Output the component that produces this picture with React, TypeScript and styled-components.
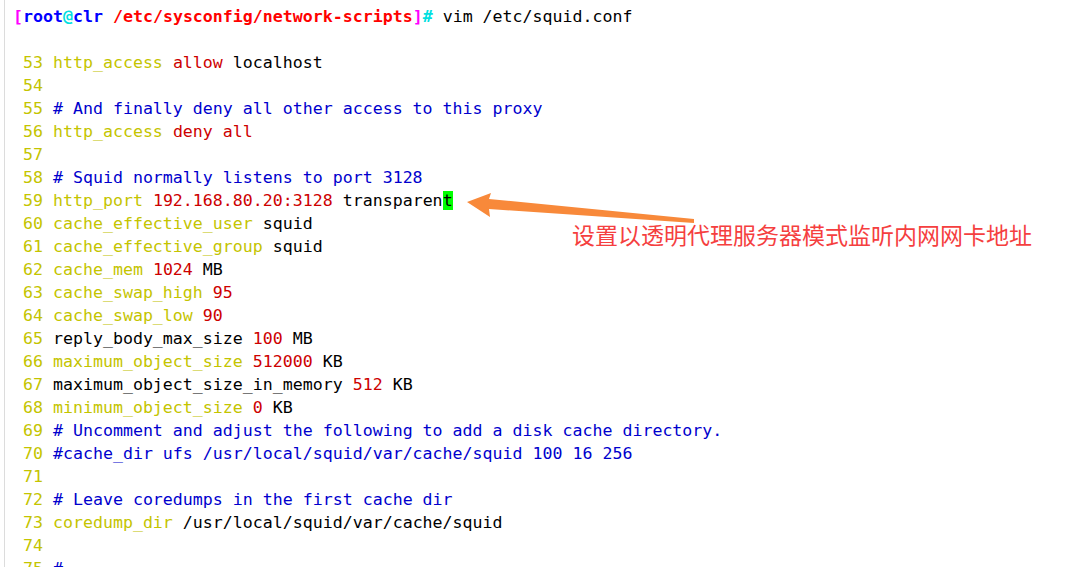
import React from "react";
import styled, { createGlobalStyle } from "styled-components";

const Global = createGlobalStyle`
  html, body { margin: 0; padding: 0; background: #ffffff; overflow: hidden; }
  #root { width: 1084px; height: 567px; }
`;

const Screen = styled.div`
  position: relative;
  width: 1084px;
  height: 567px;
  overflow: hidden;
  background: #ffffff;
  display: flex;
`;

const Gutter = styled.div`
  width: 4px;
  flex: none;
  border-right: 1px solid #dcdcdc;
`;

const Terminal = styled.div`
  flex: 1;
  padding: 5px 0 0 8px;
  font-family: "DejaVu Sans Mono", "Liberation Mono", monospace;
  font-size: 16.6px;
  line-height: 23px;
  color: #000000;
  white-space: pre;
`;

const Row = styled.div`
  height: 23px;
`;

const Num = styled.span`
  color: #c4c400;
`;

type Tone = "kw" | "val" | "plain" | "comment" | "cursor";

const toneColor: Record<Tone, string> = {
  kw: "#c4c400",
  val: "#cd0000",
  plain: "#000000",
  comment: "#0000cd",
  cursor: "#000000",
};

const Tok = styled.span<{ $tone: Tone }>`
  color: ${(p) => toneColor[p.$tone]};
  background: ${(p) => (p.$tone === "cursor" ? "#00ff00" : "transparent")};
`;

const P = styled.span<{ $c: string }>`
  color: ${(p) => p.$c};
  font-weight: bold;
`;

const Label = styled.div`
  position: absolute;
  left: 572px;
  top: 219px;
  font-family: "Noto Sans CJK SC", "Noto Sans", sans-serif;
  font-size: 23px;
  line-height: 30px;
  color: #f53f3f;
  white-space: nowrap;
`;

const ArrowSvg = styled.svg`
  position: absolute;
  left: 0;
  top: 0;
  pointer-events: none;
`;

type Seg = [Tone, string];
const lines: [number, Seg[]][] = [
  [53, [["kw", "http_access"], ["plain", " "], ["val", "allow"], ["plain", " localhost"]]],
  [54, []],
  [55, [["comment", "# And finally deny all other access to this proxy"]]],
  [56, [["kw", "http_access"], ["plain", " "], ["val", "deny all"]]],
  [57, []],
  [58, [["comment", "# Squid normally listens to port 3128"]]],
  [59, [["kw", "http_port"], ["plain", " "], ["val", "192.168.80.20:3128"], ["plain", " transparen"], ["cursor", "t"]]],
  [60, [["kw", "cache_effective_user"], ["plain", " squid"]]],
  [61, [["kw", "cache_effective_group"], ["plain", " squid"]]],
  [62, [["kw", "cache_mem"], ["plain", " "], ["val", "1024"], ["plain", " MB"]]],
  [63, [["kw", "cache_swap_high"], ["plain", " "], ["val", "95"]]],
  [64, [["kw", "cache_swap_low"], ["plain", " "], ["val", "90"]]],
  [65, [["plain", "reply_body_max_size "], ["val", "100"], ["plain", " MB"]]],
  [66, [["kw", "maximum_object_size"], ["plain", " "], ["val", "512000"], ["plain", " KB"]]],
  [67, [["plain", "maximum_object_size_in_memory "], ["val", "512"], ["plain", " KB"]]],
  [68, [["kw", "minimum_object_size"], ["plain", " "], ["val", "0"], ["plain", " KB"]]],
  [69, [["comment", "# Uncomment and adjust the following to add a disk cache directory."]]],
  [70, [["comment", "#cache_dir ufs /usr/local/squid/var/cache/squid 100 16 256"]]],
  [71, []],
  [72, [["comment", "# Leave coredumps in the first cache dir"]]],
  [73, [["kw", "coredump_dir"], ["plain", " /usr/local/squid/var/cache/squid"]]],
  [74, []],
  [75, [["comment", "#"]]],
];

export default function App() {
  return (
    <>
      <Global />
      <Screen>
        <Gutter />
        <Terminal>
          <Row>
            <P $c="#ff00ff">[</P>
            <P $c="#0000ff">root</P>
            <P $c="#00e0e0">@</P>
            <P $c="#0000ff">clr</P>
            <P $c="#ff0000"> /etc/sysconfig/network-scripts</P>
            <P $c="#ff00ff">]</P>
            <P $c="#00e0e0">#</P>
            <Tok $tone="plain"> vim /etc/squid.conf</Tok>
          </Row>
          <Row />
          {lines.map(([n, segs]) => (
            <Row key={n}>
              <Num>{" " + n + " "}</Num>
              {segs.map(([t, s], i) => (
                <Tok key={i} $tone={t}>
                  {s}
                </Tok>
              ))}
            </Row>
          ))}
        </Terminal>
        <ArrowSvg width="1084" height="567" viewBox="0 0 1084 567">
          <polygon
            points="467,202 491,193 489,199 694,219 694,223 489,209 490,217"
            fill="#f8893a"
          />
        </ArrowSvg>
        <Label>设置以透明代理服务器模式监听内网网卡地址</Label>
      </Screen>
    </>
  );
}
